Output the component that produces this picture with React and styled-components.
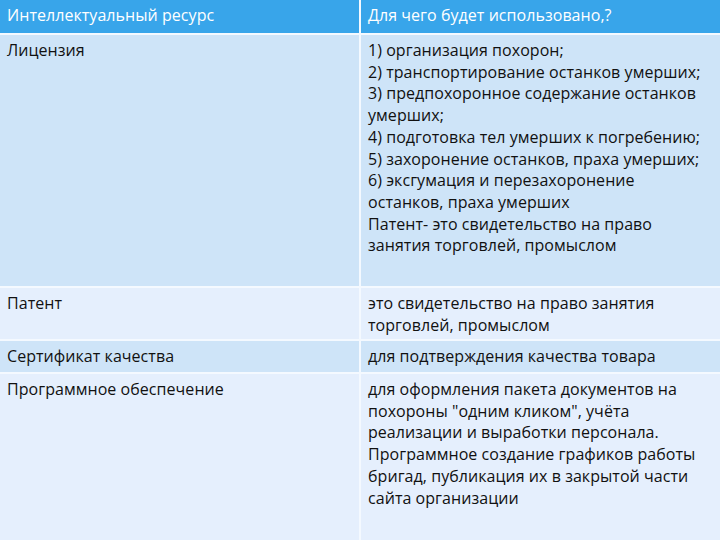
import React from "react";
import styled, { createGlobalStyle } from "styled-components";

const GlobalStyle = createGlobalStyle`
  html, body {
    margin: 0;
    padding: 0;
    background: #ffffff;
  }
  body {
    font-family: "Open Sans", "Noto Sans", sans-serif;
  }
`;

const Table = styled.div`
  width: 720px;
  height: 540px;
  overflow: hidden;
  display: grid;
  grid-template-columns: 359px 359px;
  grid-auto-rows: auto;
  column-gap: 2px;
  row-gap: 2px;
  background: #f4f9ff;
`;

const Cell = styled.div`
  height: ${(p) => p.h}px;
  box-sizing: border-box;
  padding: 5px 7px;
  background: ${(p) => (p.head ? "#38a5ea" : p.alt ? "#e5effd" : "#cee4f8")};
  color: ${(p) => (p.head ? "#ffffff" : "#111111")};
  font-size: 16px;
  line-height: 21.7px;
  letter-spacing: 0.05px;
  white-space: pre-line;
`;

const rows = [
  {
    h: 251,
    left: "Лицензия",
    right:
      "1) организация похорон;\n2) транспортирование останков умерших;\n3) предпохоронное содержание останков\nумерших;\n4) подготовка тел умерших к погребению;\n5) захоронение останков, праха умерших;\n6) эксгумация и перезахоронение\nостанков, праха умерших\nПатент- это свидетельство на право\nзанятия торговлей, промыслом",
  },
  {
    h: 51,
    alt: true,
    left: "Патент",
    right: "это свидетельство на право занятия\nторговлей, промыслом",
  },
  {
    h: 31,
    left: "Сертификат качества",
    right: "для подтверждения качества товара",
  },
  {
    h: 170,
    alt: true,
    left: "Программное обеспечение",
    right:
      "для оформления пакета документов на\nпохороны \"одним кликом\", учёта\nреализации и выработки персонала.\nПрограммное создание графиков работы\nбригад, публикация их в закрытой части\nсайта организации",
  },
];

export default function App() {
  return (
    <>
      <GlobalStyle />
      <Table>
        <Cell head h={33}>Интеллектуальный ресурс</Cell>
        <Cell head h={33}>Для чего будет использовано,?</Cell>
        {rows.map((r, i) => (
          <React.Fragment key={i}>
            <Cell h={r.h} alt={r.alt}>{r.left}</Cell>
            <Cell h={r.h} alt={r.alt}>{r.right}</Cell>
          </React.Fragment>
        ))}
      </Table>
    </>
  );
}
